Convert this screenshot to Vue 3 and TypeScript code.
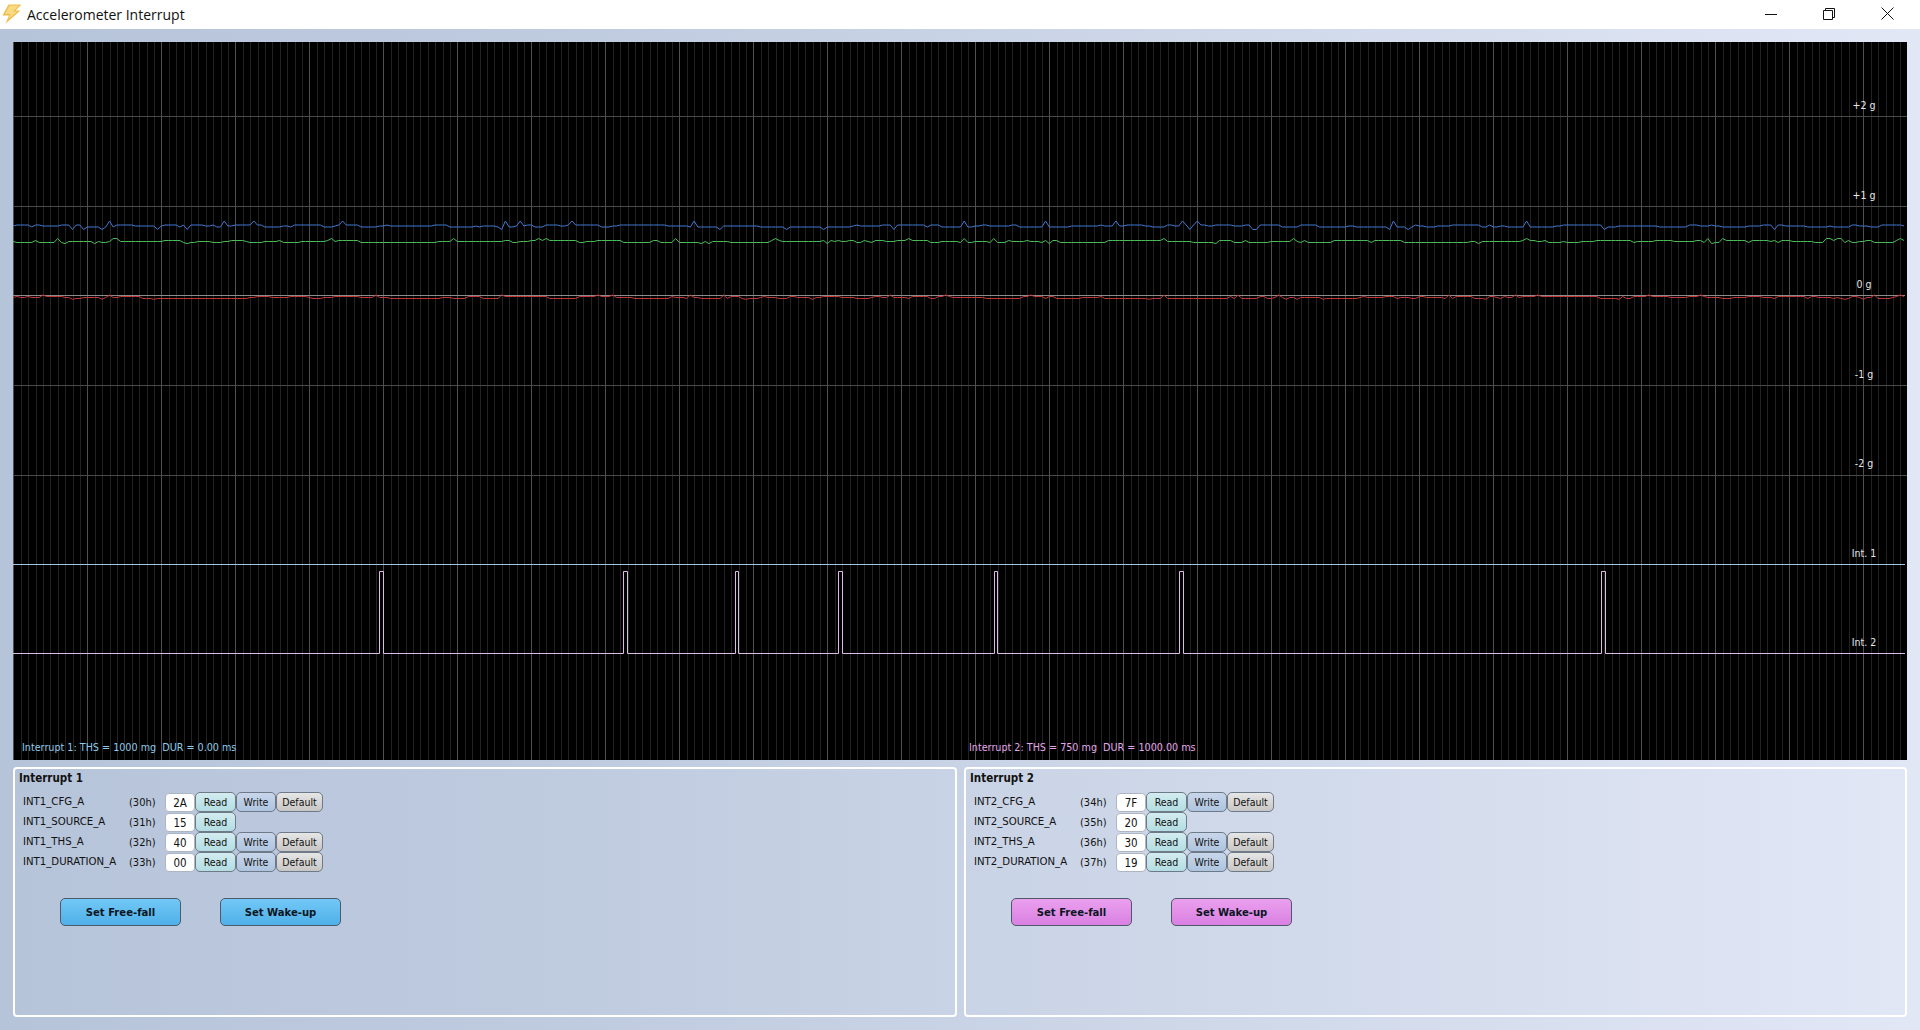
<script setup lang="ts">
import { computed } from "vue";

const plotW = 1894;
const plotH = 718;

// grid, in plot coordinates
const minorX = Array.from({ length: 256 }, (_, i) => 0.9 + i * 7.4).filter((x) => x < plotW);
const majorX = Array.from({ length: 26 }, (_, i) => 0.5 + i * 74).filter((x) => x < plotW);
const gridY = [74.5, 164.5, 343.5, 433];

const ticks = [
  { text: "+2 g", top: 57 },
  { text: "+1 g", top: 147 },
  { text: "0 g", top: 236 },
  { text: "-1 g", top: 326 },
  { text: "-2 g", top: 415 },
  { text: "Int. 1", top: 505 },
  { text: "Int. 2", top: 594 },
];

const tracePath = (seed: number, base: number, spread: number, spike: number) => {
  let s = seed;
  const rnd = () => {
    s = (s * 1664525 + 1013904223) % 4294967296;
    return s / 4294967296;
  };
  let d = `M0 ${base}`;
  let y = base;
  for (let x = 4; x < 1892; x += 3.7) {
    const r = rnd();
    let out = y;
    if (r < 0.035) out = base - spike;
    else if (r < 0.06) out = base + spike * 0.7;
    else if (r < 0.4) {
      y = base + Math.round((rnd() - 0.5) * spread);
      out = y;
    }
    d += ` L${x.toFixed(1)} ${out.toFixed(1)}`;
  }
  return d;
};

const blue = computed(() => tracePath(11, 184, 3, 5));
const green = computed(() => tracePath(29, 199.5, 3, 3));
const red = computed(() => tracePath(53, 255.5, 3, 2.5));

const pulses: [number, number][] = [
  [379.5, 383.5],
  [623.5, 627.5],
  [735.5, 738.5],
  [838.5, 842.5],
  [994.5, 997.5],
  [1179.5, 1183.5],
  [1601.5, 1605.5],
];
const pulsePath = computed(() => {
  let d = "M0 611.5";
  for (const [a, b] of pulses) {
    d += ` H${a - 13} V529.5 H${b - 13} V611.5`;
  }
  return d + " H1892";
});

const panels = [
  {
    id: 1,
    title: "Interrupt 1",
    theme: "blue",
    regs: [
      { name: "INT1_CFG_A", addr: "(30h)", value: "2A", rw: true },
      { name: "INT1_SOURCE_A", addr: "(31h)", value: "15", rw: false },
      { name: "INT1_THS_A", addr: "(32h)", value: "40", rw: true },
      { name: "INT1_DURATION_A", addr: "(33h)", value: "00", rw: true },
    ],
  },
  {
    id: 2,
    title: "Interrupt 2",
    theme: "pink",
    regs: [
      { name: "INT2_CFG_A", addr: "(34h)", value: "7F", rw: true },
      { name: "INT2_SOURCE_A", addr: "(35h)", value: "20", rw: false },
      { name: "INT2_THS_A", addr: "(36h)", value: "30", rw: true },
      { name: "INT2_DURATION_A", addr: "(37h)", value: "19", rw: true },
    ],
  },
];
</script>

<template>
  <div class="window">
    <header class="titlebar">
      <svg class="app-icon" width="21" height="20" viewBox="0 0 21 20">
        <path d="M7.5 0.5 H20.5 L14.5 6.5 H19.5 L4.5 19.5 L8 11.5 H1.5 Z" fill="#f0bd4a" />
        <path d="M8.5 1.5 H18 L12 7.5 H16.5 L7.5 15 L9.5 10 H4 Z" fill="#f9da84" />
      </svg>
      <span class="title">Accelerometer Interrupt</span>
      <div class="win-controls">
        <svg width="12" height="12" viewBox="0 0 12 12">
          <path d="M0 6.5 H12" stroke="#111" fill="none" />
        </svg>
        <svg width="12" height="12" viewBox="0 0 12 12">
          <path d="M0.5 2.5 H9.5 V11.5 H0.5 Z M2.5 2.5 V0.5 H11.5 V9.5 H9.5" stroke="#111" fill="none" />
        </svg>
        <svg width="13" height="13" viewBox="0 0 13 13">
          <path d="M0.5 0.5 L12.5 12.5 M12.5 0.5 L0.5 12.5" stroke="#111" fill="none" />
        </svg>
      </div>
    </header>

    <main class="content">
      <section class="plot">
        <svg :width="plotW" :height="plotH" :viewBox="`0 0 ${plotW} ${plotH}`" class="plot-svg">
          <g shape-rendering="crispEdges">
            <line v-for="x in minorX" :key="'m' + x" :x1="x" :x2="x" y1="0" :y2="plotH" stroke="#222222" />
            <line v-for="x in majorX" :key="'j' + x" :x1="x" :x2="x" y1="0" :y2="plotH" stroke="#505050" />
            <line v-for="y in gridY" :key="'h' + y" x1="0" :x2="plotW" :y1="y" :y2="y" stroke="#4a4a4a" />
            <line x1="0" x2="1892" y1="253.5" y2="253.5" stroke="#8c8c8c" />
          </g>
          <path :d="blue" class="trace" stroke="#4179d0" />
          <path :d="green" class="trace" stroke="#4bc058" />
          <path :d="red" class="trace" stroke="#c43838" />
          <line x1="0" x2="1892" y1="522.5" y2="522.5" stroke="#a3c7de" />
          <path :d="pulsePath" stroke="#dcbce4" fill="none" />
        </svg>
        <span v-for="t in ticks" :key="t.text" class="tick" :style="{ top: t.top + 'px' }">{{ t.text }}</span>
        <span class="status status-1">Interrupt 1: THS = 1000 mg&nbsp; DUR = 0.00 ms</span>
        <span class="status status-2">Interrupt 2: THS = 750 mg&nbsp; DUR = 1000.00 ms</span>
      </section>

      <section class="panels">
        <div v-for="p in panels" :key="p.id" class="panel" :class="p.theme">
          <h2 class="panel-title">{{ p.title }}</h2>
          <div class="regs">
            <div v-for="r in p.regs" :key="r.name" class="reg">
              <span class="reg-name">{{ r.name }}</span>
              <span class="reg-addr">{{ r.addr }}</span>
              <span class="reg-value">{{ r.value }}</span>
              <button class="btn read">Read</button>
              <template v-if="r.rw">
                <button class="btn write">Write</button>
                <button class="btn default">Default</button>
              </template>
            </div>
          </div>
          <div class="actions">
            <button class="action">Set Free-fall</button>
            <button class="action">Set Wake-up</button>
          </div>
        </div>
      </section>
    </main>
  </div>
</template>

<style>
html,
body {
  margin: 0;
  overflow: hidden;
}
</style>

<style scoped>
.window {
  width: 1920px;
  height: 1030px;
  display: flex;
  flex-direction: column;
  overflow: hidden;
  font-family: "DejaVu Sans Condensed", "DejaVu Sans", Tahoma, sans-serif;
  font-stretch: condensed;
  color: #111;
}
.titlebar {
  height: 29px;
  flex: none;
  background: #fff;
  display: flex;
  align-items: center;
}
.app-icon {
  margin-left: 1px;
  margin-top: -1px;
}
.title {
  font-family: "Open Sans", sans-serif;
  font-stretch: normal;
  font-size: 14px;
  margin-left: 5px;
  color: #111;
  margin-top: -1px;
}
.win-controls {
  margin-left: auto;
  display: flex;
  align-items: center;
  gap: 46px;
  padding-right: 26px;
  margin-top: -2px;
}
.content {
  flex: 1;
  padding: 13px 13px 0;
  display: flex;
  flex-direction: column;
  gap: 7px;
  background: linear-gradient(90deg, #b6c4da 0%, #bfcbdf 30%, #cdd7e8 60%, #e2e7f6 100%);
}
.plot {
  position: relative;
  height: 718px;
  background: #000;
  flex: none;
}
.plot-svg {
  display: block;
}
.trace {
  fill: none;
  stroke-width: 1;
}
.tick {
  position: absolute;
  left: 1821px;
  width: 60px;
  text-align: center;
  color: #e6e6e6;
  font-size: 10.5px;
  line-height: 12px;
}
.status {
  position: absolute;
  top: 700px;
  font-size: 10.7px;
  line-height: 11px;
}
.status-1 {
  left: 9px;
  color: #8fcbe8;
}
.status-2 {
  left: 956px;
  color: #e2a8ea;
}
.panels {
  display: grid;
  grid-template-columns: 944px 943px;
  gap: 7px;
  height: 250px;
}
.panel {
  border: 2px solid #fff;
  border-radius: 4px;
  padding: 2px 6px 0 4px;
}
.panel-title {
  margin: 0;
  font-size: 11.5px;
  line-height: 14px;
  font-weight: 700;
  color: #111;
}
.regs {
  margin-top: 7px;
  margin-left: 4px;
}
.reg {
  display: flex;
  align-items: center;
  height: 20px;
  font-size: 11.3px;
}
.reg-name {
  width: 106px;
  margin-top: -2px;
}
.reg-addr {
  width: 36px;
  font-size: 11px;
}
.reg-value {
  width: 30px;
  height: 19px;
  box-sizing: border-box;
  background: #fff;
  border: 1px solid #aeb6c4;
  border-radius: 4px;
  text-align: center;
  line-height: 18px;
  font-size: 11.5px;
}
.btn {
  height: 20px;
  padding: 0;
  margin: 0;
  box-sizing: border-box;
  border: 1px solid #6f7a88;
  border-radius: 5px;
  font-family: inherit;
  font-stretch: condensed;
  font-size: 10.5px;
  color: #111;
}
.read {
  width: 41px;
  background: linear-gradient(#d3ecf0, #b3dde2);
}
.write {
  width: 40px;
  background: linear-gradient(#c9d6ea, #aec4df);
}
.default {
  width: 47px;
  background: linear-gradient(#e6e6e6, #c8c6c4);
}
.actions {
  display: flex;
  gap: 39px;
  margin-top: 26px;
  margin-left: 41px;
}
.action {
  width: 121px;
  height: 28px;
  padding: 0;
  box-sizing: border-box;
  border: 1px solid #4d5a6a;
  border-radius: 5px;
  font-family: inherit;
  font-stretch: condensed;
  font-size: 11.2px;
  font-weight: 700;
  color: #0b1622;
}
.blue .action {
  background: linear-gradient(#72c8f6, #4fb0e8);
}
.pink .action {
  background: linear-gradient(#eaa0ee, #da80e2);
}
</style>
